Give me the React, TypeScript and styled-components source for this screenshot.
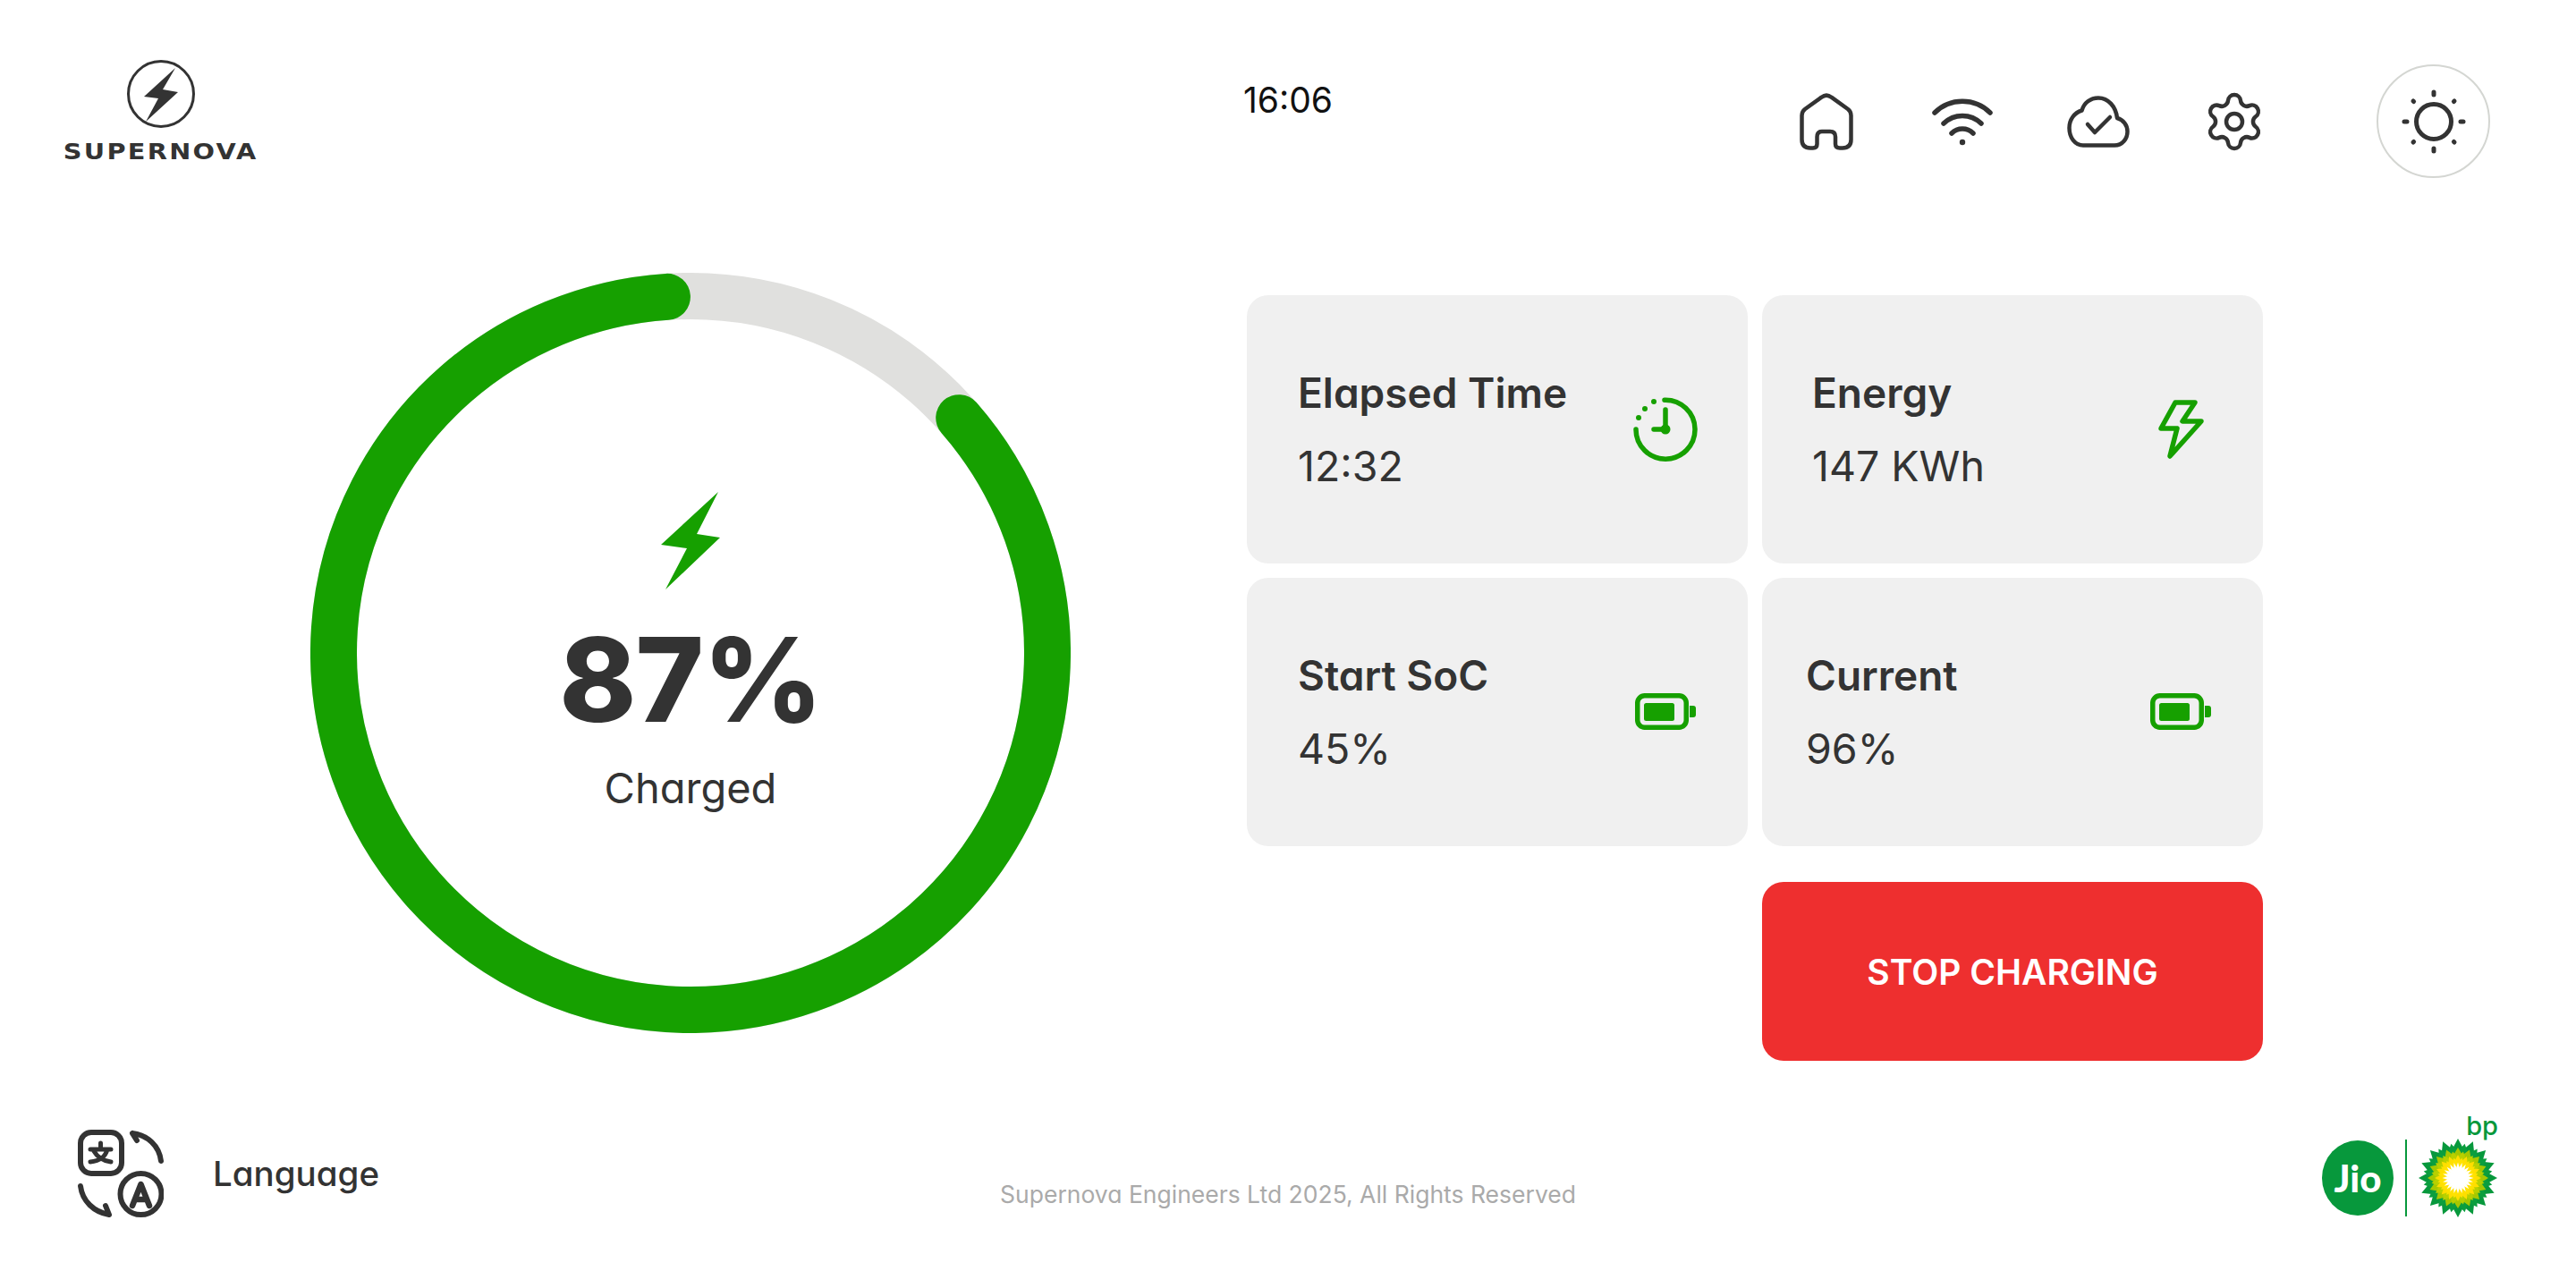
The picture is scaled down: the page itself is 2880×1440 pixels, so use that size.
import React from 'react';
import styled, { createGlobalStyle } from 'styled-components';
import { Settings } from 'lucide-react';

const GREEN = '#16a000';
const INK = '#333333';
const BP_GREEN = '#07983c';

const GlobalStyle = createGlobalStyle`
    html, body {
        margin: 0;
        padding: 0;
        background: #ffffff;
    }

    body {
        font-family: Inter, "Noto Sans", sans-serif;
        font-feature-settings: 'cv11' 1;
        color: ${INK};
    }
`;

const stats = [
    { title: 'Elapsed Time', value: '12:32', icon: 'clock', inset: 57 },
    { title: 'Energy', value: '147 KWh', icon: 'bolt', inset: 56 },
    { title: 'Start SoC', value: '45%', icon: 'battery', inset: 57 },
    { title: 'Current', value: '96%', icon: 'battery', inset: 49 },
];

const ClockIcon = () => (
    <svg width="72" height="72" viewBox="0 0 72 72" fill="none" stroke={GREEN} strokeWidth="5.5" strokeLinecap="round">
        <path d="M35 3.2A33 33 0 1 1 3 36" />
        <path d="M36 36V14M36 36H23" />
        <circle cx="36" cy="36" r="5.5" fill={GREEN} stroke="none" />
        <circle cx="6" cy="23" r="3" fill={GREEN} stroke="none" />
        <circle cx="13" cy="13" r="3" fill={GREEN} stroke="none" />
        <circle cx="23" cy="5" r="3" fill={GREEN} stroke="none" />
    </svg>
);

const BoltIcon = () => (
    <svg width="72" height="72" viewBox="0 0 72 72" fill="none" stroke={GREEN} strokeWidth="5.5" strokeLinejoin="round" strokeLinecap="round">
        <path d="M30 6H52L38 27H59L24 66L32 35H14Z" />
    </svg>
);

const BatteryIcon = () => (
    <svg width="72" height="72" viewBox="0 0 72 72" fill="none">
        <rect x="4.75" y="17.75" width="54.5" height="35.5" rx="8" stroke={GREEN} strokeWidth="5.5" />
        <rect x="12" y="26" width="34" height="20" rx="2.5" fill={GREEN} />
        <path d="M63 29H67Q70 29 70 32V39Q70 42 67 42H63Z" fill={GREEN} />
    </svg>
);

const statIcons: Record<string, React.FC> = {
    clock: ClockIcon,
    bolt: BoltIcon,
    battery: BatteryIcon,
};

const HomeIcon = () => (
    <svg width="72" height="72" viewBox="0 0 72 72" fill="none" stroke={INK} strokeWidth="4.5">
        <path d="M30.5 8.7L12 22Q8.5 24.7 8.5 29V56Q8.5 65.5 18 65.5H21Q25.5 65.5 25.5 61V53Q25.5 47 31 47H40Q46 47 46 53V61Q46 65.5 51 65.5H54Q63.5 65.5 63.5 56V29Q63.5 24.7 60 22L41.5 8.7Q36 4.5 30.5 8.7Z" />
    </svg>
);

const WifiIcon = () => (
    <svg width="72" height="72" viewBox="0 0 72 72" fill="none" stroke={INK} strokeWidth="5.5" strokeLinecap="round">
        <path d="M5 26A44 44 0 0 1 67 26" />
        <path d="M15 38A30 30 0 0 1 57 38" />
        <path d="M24 49A17 17 0 0 1 48 49" />
        <circle cx="36" cy="59" r="3.2" fill={INK} stroke="none" />
    </svg>
);

const CloudIcon = () => (
    <svg width="72" height="72" viewBox="0 0 72 72" fill="none" stroke={INK} strokeWidth="4.5" strokeLinecap="round" strokeLinejoin="round">
        <path d="M19 62.5H54C63 62.5 68.5 55 68.5 47C68.5 40 64 34 57 32C55.5 19 47 9.5 36 9.5C27 9.5 20 15 17.5 23.5C9 26 3.5 34 3.5 43C3.5 54 10 62.5 19 62.5Z" />
        <path d="M24 39L32 48L49 31" />
    </svg>
);

const SunIcon = () => (
    <svg width="72" height="72" viewBox="0 0 72 72" fill="none" stroke={INK} strokeWidth="5" strokeLinecap="round">
        <circle cx="36" cy="36" r="19.5" />
        <path d="M36 3V6M36 66V69M3 36H6M66 36H69M13 13L13.6 13.6M59 13L58.4 13.6M13 59L13.6 58.4M59 59L58.4 58.4" />
    </svg>
);

const LanguageIcon = () => (
    <svg width="96" height="98" viewBox="0 0 96 98" fill="none" stroke={INK} strokeWidth="6" strokeLinecap="round" strokeLinejoin="round">
        <rect x="3" y="3" width="46" height="46" rx="12" />
        <path d="M14 22H37M25.5 15V22M33 22C31 30 24 35 14 36M18 24C22 31 29 35 37 36" strokeWidth="5" />
        <circle cx="70.5" cy="72" r="23" />
        <path d="M61 85L70.5 61L80 85M64.5 78H76.5" strokeWidth="6.5" />
        <path d="M61 4C78 6 91 18 93 35M61 4L66 12" />
        <path d="M3 63C5 80 18 92 35 95M35 95L31 85" />
    </svg>
);

const Sunburst = () => {
    const petals = (count: number, inner: number, mid: number, outer: number, half: number, offset: number, fill: string) =>
        Array.from({ length: count }, (_, i) => (
            <polygon
                key={`${fill}-${i}`}
                points={`0,${-inner} ${half},${-mid} 0,${-outer} ${-half},${-mid}`}
                fill={fill}
                transform={`rotate(${(360 / count) * i + offset})`}
            />
        ));

    return (
        <svg width="90" height="90" viewBox="-45 -45 90 90">
            {petals(16, 18, 32, 44, 6.5, 0, BP_GREEN)}
            {petals(16, 14, 28, 39, 6.5, 11.25, '#0b9e3e')}
            {petals(16, 12, 25, 34, 5.5, 0, '#a6c800')}
            {petals(16, 10, 22, 30, 5, 11.25, '#b8d000')}
            {petals(16, 8, 18, 26, 4, 0, '#ffde00')}
            {petals(16, 6, 16, 23, 3.6, 11.25, '#ffe200')}
            <circle r="10.5" fill="#ffffff" />
            {petals(24, 8, 11, 17.5, 1.9, 0, '#ffffff')}
        </svg>
    );
};

const RING_RADIUS = 399;
const RING_SIZE = 850;
const circumference = 2 * Math.PI * RING_RADIUS;

const App: React.FC = () => (
    <Page>
        <GlobalStyle />
        <Header>
            <Brand>
                <svg width="80" height="80" viewBox="0 0 80 80">
                    <circle cx="40" cy="40" r="36.5" fill="none" stroke={INK} strokeWidth="3" />
                    <polygon points="56,11 21,43 37,45 23,71 59,38 42,35" fill={INK} />
                </svg>
                <BrandName>SUPERNOVA</BrandName>
            </Brand>
            <Clock>16:06</Clock>
            <Toolbar>
                <IconRow>
                    <HomeIcon />
                    <WifiIcon />
                    <CloudIcon />
                    <Settings size={72} color={INK} strokeWidth={1.5} />
                </IconRow>
                <ThemeButton>
                    <SunIcon />
                </ThemeButton>
            </Toolbar>
        </Header>

        <Main>
            <Ring>
                <svg width={RING_SIZE} height={RING_SIZE} viewBox={`0 0 ${RING_SIZE} ${RING_SIZE}`}>
                    <circle cx="425" cy="425" r={RING_RADIUS} fill="none" stroke="#e0e0de" strokeWidth="52" />
                    <circle
                        cx="425"
                        cy="425"
                        r={RING_RADIUS}
                        fill="none"
                        stroke={GREEN}
                        strokeWidth="52"
                        strokeLinecap="round"
                        strokeDasharray={`${circumference * 0.8537} ${circumference}`}
                        transform="rotate(-41.2 425 425)"
                    />
                </svg>
                <RingContent>
                    <svg width="66" height="109" viewBox="0 0 66 109">
                        <polygon points="64,0 0,59 29,63 5,109 66,51 40,47" fill={GREEN} />
                    </svg>
                    <Percent>87%</Percent>
                    <RingLabel>Charged</RingLabel>
                </RingContent>
            </Ring>

            <Panel>
                {stats.map((stat) => {
                    const Icon = statIcons[stat.icon];
                    return (
                        <StatCard key={stat.title} $inset={stat.inset}>
                            <div>
                                <StatTitle>{stat.title}</StatTitle>
                                <StatValue>{stat.value}</StatValue>
                            </div>
                            <Icon />
                        </StatCard>
                    );
                })}
                <StopButton type="button">STOP CHARGING</StopButton>
            </Panel>
        </Main>

        <Footer>
            <LanguagePicker>
                <LanguageIcon />
                <LanguageLabel>Language</LanguageLabel>
            </LanguagePicker>
            <Copyright>Supernova Engineers Ltd 2025, All Rights Reserved</Copyright>
            <Partners>
                <JioBadge>Jio</JioBadge>
                <PartnerDivider />
                <Sunburst />
                <BpMark>bp</BpMark>
            </Partners>
        </Footer>
    </Page>
);

const Page = styled.div`
    display: flex;
    flex-direction: column;
    width: 2880px;
    height: 1440px;
    overflow: hidden;
    background: #ffffff;
`;

const Header = styled.header`
    display: grid;
    grid-template-columns: 1fr auto 1fr;
    align-items: start;
    height: 210px;
    flex-shrink: 0;
`;

const Brand = styled.div`
    display: flex;
    flex-direction: column;
    align-items: center;
    width: 216px;
    margin: 65px 0 0 72px;
`;

const BrandName = styled.span`
    display: inline-block;
    margin-top: 12px;
    font-family: "DejaVu Sans", sans-serif;
    font-feature-settings: normal;
    font-size: 25px;
    font-weight: 700;
    line-height: 26px;
    letter-spacing: 2px;
    white-space: nowrap;
    transform: scaleX(1.15);
`;

const Clock = styled.div`
    margin-top: 88px;
    font-size: 39px;
    line-height: 48px;
    font-weight: 400;
    color: #111111;
`;

const Toolbar = styled.div`
    display: flex;
    justify-content: flex-end;
    align-items: center;
    padding: 72px 96px 0 0;
`;

const IconRow = styled.div`
    display: flex;
    gap: 80px;
    margin-right: 123px;
`;

const ThemeButton = styled.div`
    display: flex;
    align-items: center;
    justify-content: center;
    box-sizing: border-box;
    width: 127px;
    height: 127px;
    border: 2px solid #d4d6d2;
    border-radius: 50%;
`;

const Main = styled.main`
    display: flex;
    align-items: flex-start;
    flex: 1;
    min-height: 0;
    padding-left: 347px;
`;

const Ring = styled.div`
    position: relative;
    width: 850px;
    height: 850px;
    margin-top: 95px;

    svg {
        display: block;
    }
`;

const RingContent = styled.div`
    position: absolute;
    inset: 0;
    display: flex;
    flex-direction: column;
    align-items: center;
    padding-top: 245px;
`;

const Percent = styled.div`
    margin-top: 26px;
    font-size: 130px;
    font-weight: 800;
    line-height: 150px;
    letter-spacing: -1px;
`;

const RingLabel = styled.div`
    margin-top: 16px;
    font-size: 47px;
    line-height: 60px;
    font-weight: 400;
`;

const Panel = styled.section`
    display: grid;
    grid-template-columns: 560px 560px;
    gap: 16px;
    margin: 120px 0 0 197px;
`;

const StatCard = styled.div<{ $inset: number }>`
    display: flex;
    align-items: center;
    justify-content: space-between;
    height: 300px;
    box-sizing: border-box;
    padding: 0 56px 0 ${({ $inset }) => $inset}px;
    background: #f0f0f0;
    border-radius: 24px;
`;

const StatTitle = styled.div`
    font-size: 46px;
    line-height: 56px;
    font-weight: 600;
`;

const StatValue = styled.div`
    margin-top: 26px;
    font-size: 46.5px;
    line-height: 56px;
    font-weight: 400;
`;

const StopButton = styled.button`
    grid-column: 2;
    height: 200px;
    margin-top: 24px;
    background: #ee2f2f;
    border: none;
    border-radius: 24px;
    color: #ffffff;
    font-family: inherit;
    font-feature-settings: inherit;
    font-size: 39px;
    font-weight: 600;
`;

const Footer = styled.footer`
    display: grid;
    grid-template-columns: 1fr auto 1fr;
    align-items: start;
    height: 200px;
    flex-shrink: 0;
`;

const LanguagePicker = styled.div`
    display: flex;
    align-items: center;
    gap: 55px;
    padding: 23px 0 0 87px;
`;

const LanguageLabel = styled.span`
    font-size: 38.5px;
    font-weight: 500;
`;

const Copyright = styled.div`
    margin-top: 78px;
    font-size: 26.5px;
    line-height: 34px;
    color: #aaaaaa;
`;

const Partners = styled.div`
    position: relative;
    display: flex;
    justify-content: flex-end;
    align-items: center;
    padding: 32px 87px 0 0;
`;

const JioBadge = styled.div`
    display: flex;
    align-items: center;
    justify-content: center;
    width: 80px;
    height: 84px;
    border-radius: 50%;
    background: ${BP_GREEN};
    color: #ffffff;
    font-family: Lato, sans-serif;
    font-feature-settings: normal;
    font-size: 42px;
    font-weight: 900;
`;

const PartnerDivider = styled.div`
    width: 2px;
    height: 86px;
    margin: 0 12px 0 13px;
    background: ${BP_GREEN};
`;

const BpMark = styled.span`
    position: absolute;
    top: -1px;
    right: 87px;
    font-size: 29px;
    font-weight: 500;
    line-height: 40px;
    color: ${BP_GREEN};
`;

export default App;
